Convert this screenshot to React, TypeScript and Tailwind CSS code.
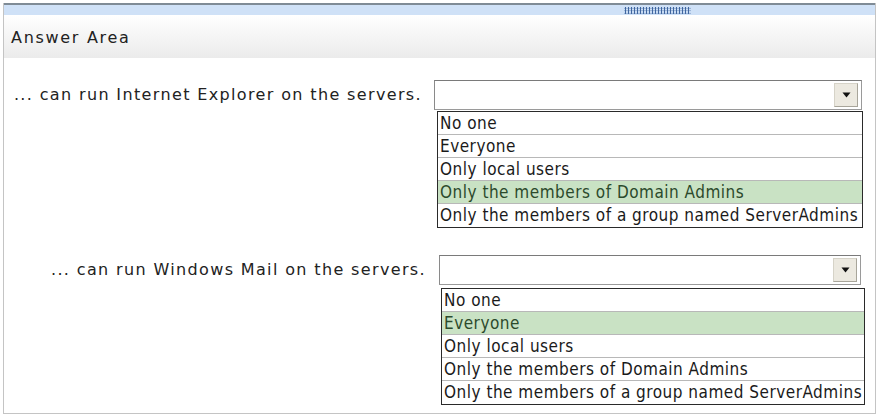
import React from "react";

const lists1 = ["No one", "Everyone", "Only local users", "Only the members of Domain Admins", "Only the members of a group named ServerAdmins"];

function Select({ width }: { width: number }) {
  return (
    <div
      className="relative h-[30px] border border-[#9a9a9a] border-t-[#7a7a7a] border-l-[#8a8a8a] bg-white"
      style={{ width }}
    >
      <div className="absolute right-[3px] top-[2px] bottom-[2px] w-[24px] bg-[#ece9e0] border border-[#d6d3c8] border-r-[#a8a59a] border-b-[#a8a59a] flex items-center justify-center">
        <svg width="9" height="6" viewBox="0 0 9 6">
          <path d="M0.5 0.5 H8.5 L4.5 5.5 Z" fill="#111" />
        </svg>
      </div>
    </div>
  );
}

function List({ width, selected }: { width: number; selected: number }) {
  return (
    <div className="border border-[#2a2a2a] bg-white" style={{ width }}>
      {lists1.map((t, i) => (
        <div
          key={t}
          className={
            "h-[23px] leading-[23px] pl-[2px] text-[17px] tracking-[0.5px] whitespace-nowrap overflow-hidden " +
            (i < lists1.length - 1 ? "border-b border-[#b8b8b8] " : "") +
            (i === selected ? "bg-[#c9e2c4] text-[#2c4a2c]" : "text-[#1a1a1a]")
          }
          style={{ fontFamily: "Tahoma, 'DejaVu Sans Condensed', 'Liberation Sans', sans-serif" }}
        >
          {t}
        </div>
      ))}
    </div>
  );
}

export default function App() {
  return (
    <div className="w-[880px] h-[419px] bg-white pt-[3px] px-[3px]">
      <div className="w-[873px] h-[411px] border-x border-b border-[#c4c4c4] flex flex-col">
        <div className="h-[2px] bg-[#7f8b96]" />
        <div className="h-[10px] bg-[#cfe1f7] relative">
          <div
            className="absolute left-[620px] top-[2px] w-[67px] h-[7px]"
            style={{
              backgroundImage: "radial-gradient(circle, #3f66a0 0.9px, transparent 1.1px)",
              backgroundSize: "3px 2.5px",
            }}
          />
        </div>
        <div className="h-[43px] bg-gradient-to-b from-white to-[#ebebeb] flex items-center pl-[7px] pt-[3px]">
          <span className="text-[16px] tracking-[1.7px] text-[#222]" style={{ fontFamily: "'DejaVu Sans', Verdana, sans-serif" }}>
            Answer Area
          </span>
        </div>
        <div className="pt-[22px] flex flex-col" style={{ fontFamily: "'DejaVu Sans', Verdana, sans-serif" }}>
          <div className="flex">
            <div className="w-[418px] h-[30px] flex items-center justify-end text-[16px] tracking-[1.36px] text-[#222] whitespace-nowrap">
              ... can run Internet Explorer on the servers.
            </div>
            <div className="ml-[12px] flex flex-col">
              <Select width={428} />
              <div className="ml-[3px] mt-px">
                <List width={426} selected={3} />
              </div>
            </div>
          </div>
          <div className="flex mt-[27px]">
            <div className="w-[422px] h-[30px] flex items-center justify-end text-[16px] tracking-[1.36px] text-[#222] whitespace-nowrap">
              ... can run Windows Mail on the servers.
            </div>
            <div className="ml-[13px] flex flex-col">
              <Select width={422} />
              <div className="ml-[2px] mt-[3px]">
                <List width={424} selected={1} />
              </div>
            </div>
          </div>
        </div>
      </div>
    </div>
  );
}
